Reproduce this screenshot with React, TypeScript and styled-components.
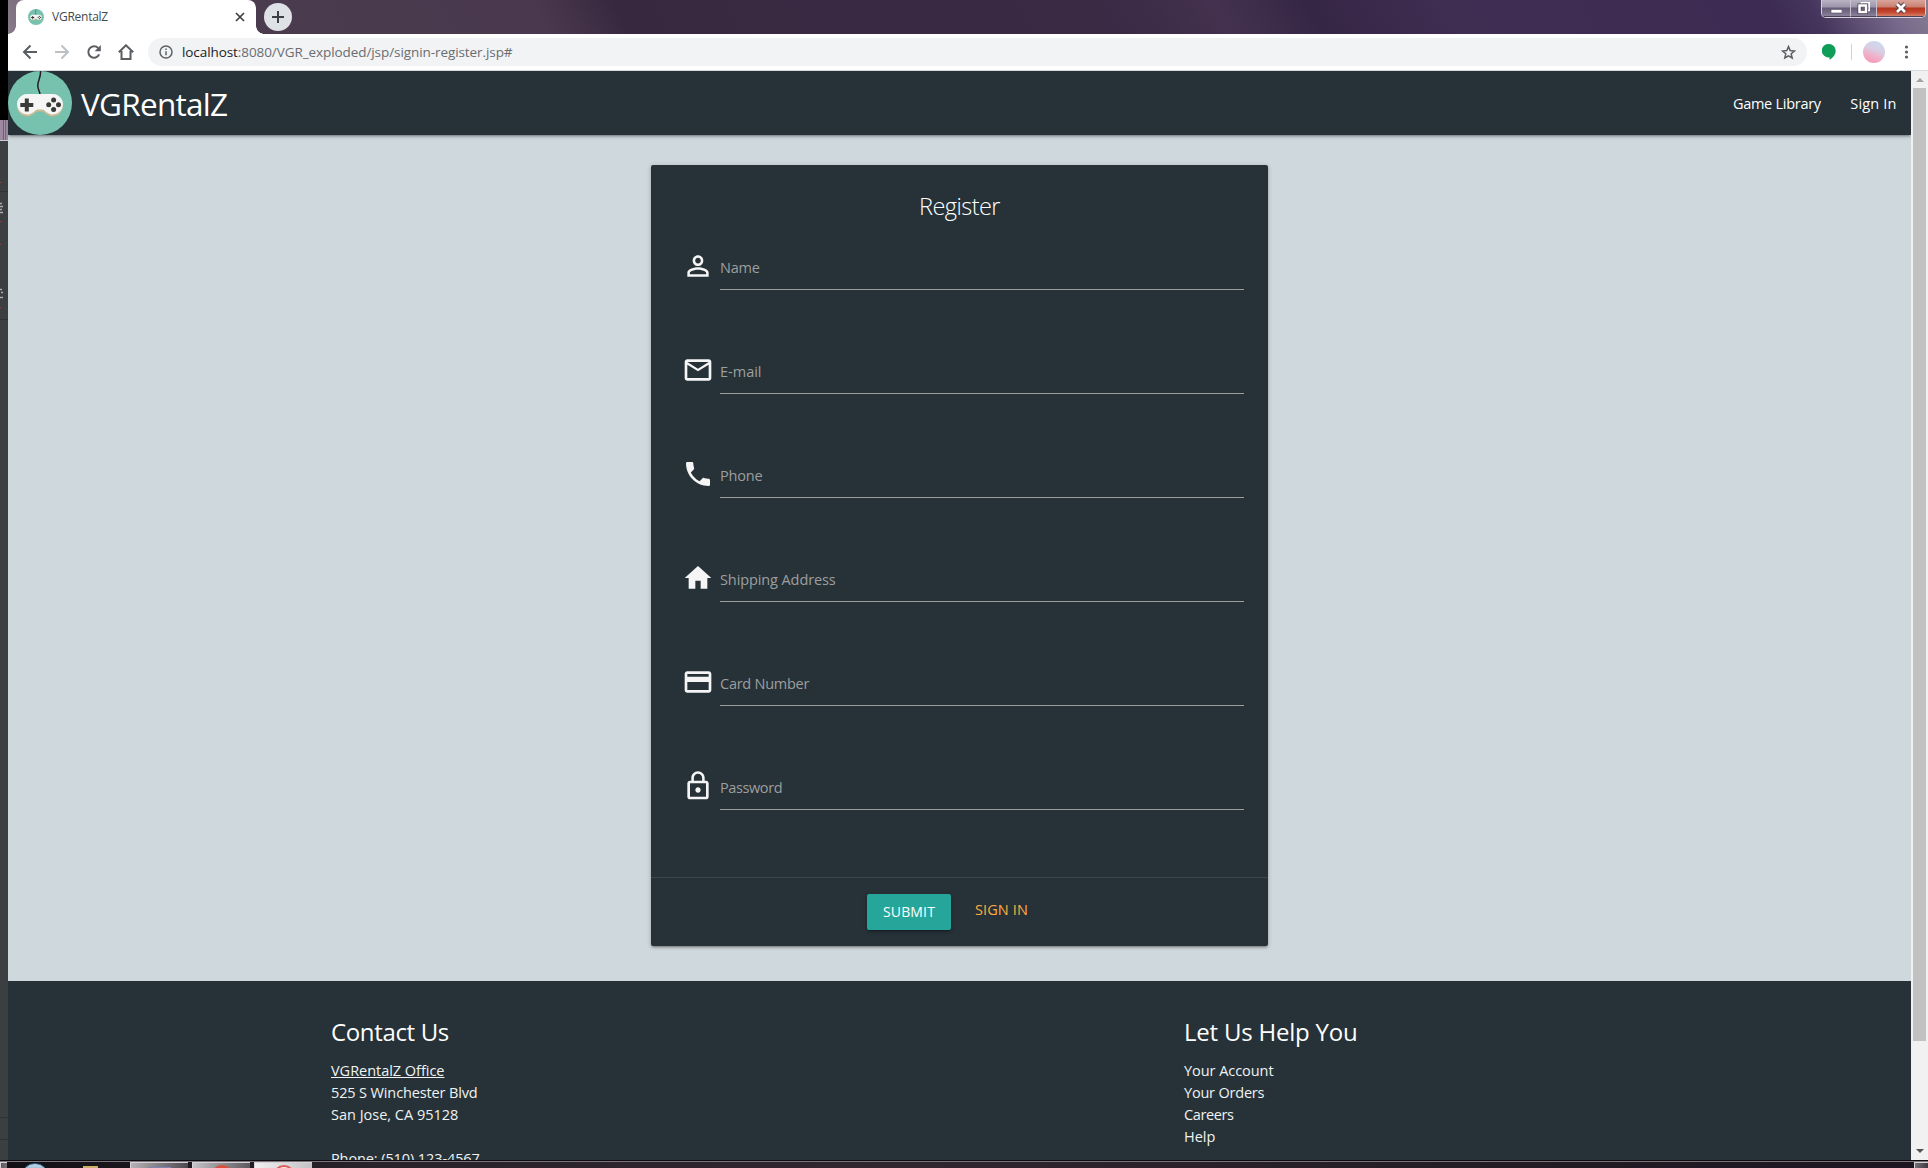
import React from "react";
import styled, { createGlobalStyle } from "styled-components";

const GlobalStyle = createGlobalStyle`
  * { box-sizing: border-box; }
  html, body { margin: 0; padding: 0; overflow: hidden; }
  body { font-family: "Open Sans", "Noto Sans", sans-serif; font-size: 14.5px; }
  svg { display: block; flex: none; }
`;

/* ---------- desktop ---------- */

const Desktop = styled.div`
  display: flex;
  flex-direction: column;
  width: 1928px;
  height: 1168px;
  overflow: hidden;
  background: #000;
`;

const Workspace = styled.div`
  display: flex;
  height: 1160px;
`;

const BackgroundWindow = styled.div`
  display: flex;
  flex-direction: column;
  width: 8px;
  padding-top: 120px;
  background: #000;
`;

const BackgroundFrame = styled.div`
  height: 21px;
  background: linear-gradient(90deg, #9c88a0 0 3px, #6d5c72 3px 4px, #a592a9 4px 5px, #75647a 5px 6px, #9a879e 6px);
  border-bottom: 1px solid #d3c8d6;
`;

const BackgroundBody = styled.div`
  flex: 1;
  background: #3c3f41;
`;

const Window = styled.div`
  display: flex;
  flex-direction: column;
  width: 1920px;
`;

/* ---------- browser chrome ---------- */

const TitleBar = styled.div`
  display: flex;
  align-items: flex-start;
  height: 34px;
  padding-left: 8px;
  background: linear-gradient(
    60deg,
    #887a8a 0,
    #6c5d70 60px,
    #4a3b4e 220px,
    #4a394e 470px,
    #38283f 540px,
    #3a2a44 960px,
    #43314f 1060px,
    #362645 1140px,
    #402d52 1260px,
    #3d2b53 1540px,
    #45345b 1575px,
    #75688a 1640px,
    #877e94 1680px
  );
`;

const Tab = styled.div`
  position: relative;
  display: flex;
  align-items: center;
  width: 240px;
  height: 34px;
  padding: 0 9px 0 12px;
  background: #fff;
  border-radius: 8px 8px 0 0;

  &::before,
  &::after {
    content: "";
    position: absolute;
    bottom: 0;
    width: 8px;
    height: 8px;
  }
  &::before {
    left: -8px;
    background: radial-gradient(circle at 0 0, transparent 7.5px, #fff 8px);
  }
  &::after {
    right: -8px;
    background: radial-gradient(circle at 100% 0, transparent 7.5px, #fff 8px);
  }
`;

const TabTitle = styled.span`
  flex: 1;
  margin: 0 0 1px 8px;
  font-size: 12px;
  letter-spacing: -0.25px;
  color: #45494d;
`;

const NewTab = styled.div`
  display: flex;
  align-items: center;
  justify-content: center;
  width: 28px;
  height: 28px;
  margin: 3px 0 0 8px;
  border-radius: 50%;
  background: #dee1e6;
`;

const WindowControls = styled.div`
  display: flex;
  width: 105px;
  height: 18px;
  margin-left: auto;
  margin-right: 2px;
  border: 1px solid #d8d2de;
  border-top: 0;
  border-radius: 0 0 5px 5px;
  box-shadow: inset 0 0 0 1px #3d3448;
  overflow: hidden;
`;

const ControlButton = styled.div<{ $width: number; $danger?: boolean }>`
  display: flex;
  align-items: center;
  justify-content: center;
  width: ${(p) => p.$width}px;
  height: 17px;
  border-right: ${(p) => (p.$danger ? 0 : 1)}px solid #c9c2d0;
  border-bottom: 1px solid #4a4058;
  background: ${(p) =>
    p.$danger
      ? "linear-gradient(#d9a49c 0, #c98070 7px, #b53420 8px, #c4472e 12px, #d98a72 17px)"
      : "linear-gradient(#b9b3c4 0, #9d95aa 7px, #675d78 8px, #756b85 12px, #9088a0 17px)"};
`;

const Toolbar = styled.div`
  display: flex;
  align-items: center;
  height: 37px;
  padding-left: 14px;
  background: #fff;
  border-bottom: 1px solid #d7d9dc;
`;

const NavIcons = styled.div`
  display: flex;
  gap: 16px;
  width: 126px;
`;

const AddressBar = styled.div`
  display: flex;
  align-items: center;
  width: 1659px;
  height: 28px;
  padding: 0 11px;
  border-radius: 14px;
  background: #f1f3f4;
`;

const Url = styled.span`
  flex: 1;
  margin-left: 9px;
  font-size: 13.5px;
  letter-spacing: -0.08px;
  line-height: 28px;
  color: #696d72;

  b {
    font-weight: 400;
    color: #202124;
  }
`;

const ToolbarDivider = styled.div`
  width: 1px;
  height: 16px;
  margin: 0 11px 0 15px;
  background: #cfd1d4;
`;

const Avatar = styled.div`
  width: 22px;
  height: 22px;
  margin-right: 15px;
  border-radius: 50%;
  background: linear-gradient(20deg, #f78fb0 0, #f0b0c8 35%, #d8cfe4 60%, #cbdcf0 100%);
`;

/* ---------- page ---------- */

const Viewport = styled.div`
  display: flex;
  height: 1089px;
`;

const Page = styled.div`
  display: flex;
  flex-direction: column;
  width: 1903px;
  overflow: hidden;
  background: #cfd8dc;
  color: #fff;
`;

const Header = styled.header`
  position: relative;
  display: flex;
  align-items: center;
  height: 64px;
  flex: none;
  padding-right: 14.5px;
  background: #263238;
  box-shadow: 0 2px 2px 0 rgba(0, 0, 0, 0.14), 0 3px 1px -2px rgba(0, 0, 0, 0.12),
    0 1px 5px 0 rgba(0, 0, 0, 0.2);
`;

const Brand = styled.span`
  margin-left: 9px;
  padding-top: 1px;
  font-size: 31.5px;
  line-height: 65px;
  letter-spacing: -0.72px;
  color: #fff;
`;

const Menu = styled.nav`
  display: flex;
  gap: 29.5px;
  margin-left: auto;
  padding-top: 2px;
  line-height: 64px;
`;

const Label = styled.span<{ $track?: number }>`
  letter-spacing: ${(p) => p.$track ?? 0}px;
  white-space: nowrap;
`;

const Main = styled.main`
  display: flex;
  justify-content: center;
  height: 846px;
  flex: none;
  padding-top: 30px;
`;

const Card = styled.section`
  width: 617px;
  height: 781px;
  border-radius: 2px;
  background: #263238;
  box-shadow: 0 2px 2px 0 rgba(0, 0, 0, 0.14), 0 3px 1px -2px rgba(0, 0, 0, 0.12),
    0 1px 5px 0 rgba(0, 0, 0, 0.2);
`;

const CardContent = styled.div`
  height: 712px;
  padding: 24px 23px 24px 31px;
`;

const CardTitle = styled.h1`
  margin: 0 0 8px -8px;
  height: 32px;
  font-size: 23.5px;
  font-weight: 300;
  line-height: 35px;
  letter-spacing: -0.55px;
  text-align: center;
`;

const Field = styled.label`
  display: flex;
  height: 104px;
  color: #9e9e9e;

  svg {
    margin-top: 21px;
  }
`;

const FieldInput = styled.div`
  width: 524px;
  height: 61px;
  margin-left: 6px;
  padding-top: 28px;
  border-bottom: 1px solid #9e9e9e;
  line-height: 22px;
`;

const CardAction = styled.div`
  display: flex;
  height: 69px;
  padding: 16px 24px 16px 216px;
  border-top: 1px solid #3c474c;
`;

const SubmitButton = styled.button`
  width: 84px;
  height: 36px;
  padding: 0;
  border: 0;
  border-radius: 2px;
  background: #26a69a;
  color: #fff;
  font: 14px/36px "Open Sans", sans-serif;
  letter-spacing: 0.15px;
  box-shadow: 0 2px 2px 0 rgba(0, 0, 0, 0.14), 0 3px 1px -2px rgba(0, 0, 0, 0.12),
    0 1px 5px 0 rgba(0, 0, 0, 0.2);
`;

const SignInLink = styled.a`
  margin-left: 24px;
  line-height: 31px;
  letter-spacing: 0.1px;
  color: #ffab40;
`;

const Footer = styled.footer`
  display: flex;
  height: 179px;
  flex: none;
  padding: 35px 0 0 323px;
  overflow: hidden;
  background: #263238;
`;

const FooterColumn = styled.div<{ $width: number }>`
  width: ${(p) => p.$width}px;
`;

const FooterHeading = styled.h2<{ $track: number }>`
  margin: 0 0 12px;
  font-size: 24px;
  font-weight: 400;
  line-height: 32px;
  letter-spacing: ${(p) => p.$track}px;
`;

const FooterLine = styled.div<{ $underline?: boolean }>`
  height: 22px;
  line-height: 22px;
  color: #f0f2f3;
  text-decoration: ${(p) => (p.$underline ? "underline" : "none")};
  text-underline-offset: 1px;
  text-decoration-thickness: 1px;
`;

const Scrollbar = styled.div`
  display: flex;
  flex-direction: column;
  align-items: center;
  justify-content: space-between;
  width: 17px;
  padding: 7px 0;
  background: #f1f1f1;
`;

const ScrollArrow = styled.div<{ $down?: boolean }>`
  width: 0;
  height: 0;
  border-left: 4px solid transparent;
  border-right: 4px solid transparent;
  ${(p) =>
    p.$down ? "border-top: 4px solid #505050;" : "border-bottom: 4px solid #a3a3a3;"}
`;

const ScrollThumb = styled.div`
  width: 13px;
  height: 953px;
  margin: 6px 0 auto;
  background: #c1c1c1;
`;

/* ---------- taskbar ---------- */

const Taskbar = styled.div`
  display: flex;
  height: 8px;
  padding-top: 1px;
  border-top: 1px solid #0d0b0e;
  background: linear-gradient(#7d757e 0 1px, transparent 1px),
    linear-gradient(90deg, #120f14 0, #2a222b 380px, #2f262f 900px, #241c25 1500px, #1d151f);
`;

const TaskGlass = styled.div<{ $width: number; $gap: number; $from: string; $to: string }>`
  display: flex;
  justify-content: center;
  width: ${(p) => p.$width}px;
  height: 7px;
  margin-left: ${(p) => p.$gap}px;
  overflow: hidden;
  border-left: 1px solid #d5d2d6;
  border-top: 1px solid #d5d2d6;
  background: linear-gradient(100deg, ${(p) => p.$from}, ${(p) => p.$to});
`;

const StartOrb = styled.div`
  width: 28px;
  height: 28px;
  margin: 1px 0 -22px 14px;
  border-radius: 50%;
  border: 1px solid #2d6692;
  background: linear-gradient(#c4dae8, #8fb4cc 7px);
`;

const FolderTip = styled.div`
  width: 15px;
  height: 2px;
  margin: 4px 0 0 34px;
  background: #cfb06a;
`;

const GlassIcon = styled.div<{ $color: string; $ring?: boolean }>`
  width: 22px;
  height: 22px;
  margin-top: 2px;
  border-radius: 50%;
  background: ${(p) => (p.$ring ? "#f7e9e9" : p.$color)};
  border: 2px solid ${(p) => p.$color};
`;

const BlueTip = styled.div`
  width: 22px;
  height: 2px;
  margin-top: 4px;
  background: #7d84b4;
`;

/* ---------- drawings ---------- */

const PAD_BODY =
  "M19 23h26a10.200 10.200 0 1 1-6.800 18c-1.500-1.500-2.200-2.500-4-2.500h-4.400c-1.800 0-2.500 1-4 2.500A10.200 10.200 0 1 1 19 23z";

const PadLogo = ({ size }: { size: number }) => (
  <svg width={size} height={size} viewBox="0 0 64 64">
    <circle cx="32" cy="32" r="32" fill="#76c2af" />
    <path d="M32.500 0C33 7 29.800 9 29.800 14.500C29.800 19 32 20 32 24" fill="none" stroke="#231f20" strokeWidth="1.500" />
    <path d={PAD_BODY} fill="#c9bb94" transform="translate(0 2)" />
    <path d={PAD_BODY} fill="#f5f5f5" />
    <path d="M16.800 27.500h4v4.500h4.500v4h-4.500v4.500h-4V36h-4.500v-4h4.500z" fill="#3a3a38" />
    <g fill="#3a3a38">
      <circle cx="45.600" cy="29" r="2.500" />
      <circle cx="45.600" cy="38.500" r="2.500" />
      <circle cx="40.700" cy="33.700" r="2.500" />
      <circle cx="50.500" cy="33.700" r="2.500" />
    </g>
  </svg>
);

const MaterialIcon = ({ d, size = 32, color = "#f5f5f5" }: { d: string; size?: number; color?: string }) => (
  <svg width={size} height={size} viewBox="0 0 24 24" fill={color}>
    <path d={d} />
  </svg>
);

const LineIcon = ({ d, color = "#5a5e63" }: { d: string; color?: string }) => (
  <svg width="16" height="16" viewBox="0 0 16 16" fill="none" stroke={color} strokeWidth="2">
    <path d={d} />
  </svg>
);

const ExtensionIcon = styled.svg`
  margin-left: 15px;
`;

const MenuDots = styled.svg`
  margin-left: -2px;
`;

const fields = [
  {
    label: "Name",
    track: -0.2,
    d: "M12 5.9c1.160 0 2.100.94 2.100 2.100s-.94 2.100-2.100 2.100S9.900 9.160 9.900 8s.94-2.100 2.100-2.100m0 9c2.970 0 6.100 1.460 6.100 2.100v1.100H5.900V17c0-.64 3.130-2.100 6.100-2.100M12 4C9.790 4 8 5.790 8 8s1.790 4 4 4 4-1.790 4-4-1.790-4-4-4zm0 9c-2.670 0-8 1.340-8 4v3h16v-3c0-2.660-5.330-4-8-4z",
  },
  {
    label: "E-mail",
    track: 0,
    d: "M20 4H4c-1.100 0-1.990.9-1.990 2L2 18c0 1.100.9 2 2 2h16c1.100 0 2-.9 2-2V6c0-1.100-.9-2-2-2zm0 14H4V8l8 5 8-5v10zm-8-7L4 6h16l-8 5z",
  },
  {
    label: "Phone",
    track: -0.2,
    d: "M6.620 10.790c1.440 2.830 3.760 5.140 6.590 6.590l2.200-2.200c.27-.27.67-.36 1.020-.24 1.120.37 2.330.57 3.570.57.55 0 1 .45 1 1V20c0 .55-.45 1-1 1-9.390 0-17-7.610-17-17 0-.55.45-1 1-1h3.500c.55 0 1 .45 1 1 0 1.250.2 2.450.57 3.570.11.35.03.74-.25 1.020l-2.200 2.200z",
  },
  { label: "Shipping Address", track: -0.1, d: "M10 20v-6h4v6h5v-8h3L12 3 2 12h3v8z" },
  {
    label: "Card Number",
    track: -0.25,
    d: "M20 4H4c-1.110 0-1.990.89-1.990 2L2 18c0 1.110.89 2 2 2h16c1.110 0 2-.89 2-2V6c0-1.110-.89-2-2-2zm0 14H4v-6h16v6zm0-10H4V6h16v2z",
  },
  {
    label: "Password",
    track: -0.4,
    d: "M12 17c1.100 0 2-.9 2-2s-.9-2-2-2-2 .9-2 2 .9 2 2 2zm6-9h-1V6c0-2.760-2.240-5-5-5S7 3.240 7 6v2H6c-1.100 0-2 .9-2 2v10c0 1.100.9 2 2 2h12c1.100 0 2-.9 2-2V10c0-1.100-.9-2-2-2zM8.900 6c0-1.710 1.390-3.100 3.100-3.100s3.100 1.390 3.100 3.100v2H8.900V6zM18 20H6V10h12v10z",
  },
];

const contactLines = [
  { text: "VGRentalZ Office", track: -0.03, underline: true },
  { text: "525 S Winchester Blvd", track: -0.13 },
  { text: "San Jose, CA 95128", track: 0 },
  { text: "", track: 0 },
  { text: "Phone: (510) 123-4567", track: -0.1 },
];

const helpLines = [
  { text: "Your Account", track: -0.05 },
  { text: "Your Orders", track: -0.2 },
  { text: "Careers", track: -0.4 },
  { text: "Help", track: 0 },
];

const BrowserChrome = () => (
  <>
    <TitleBar>
      <Tab>
        <PadLogo size={16} />
        <TabTitle>VGRentalZ</TabTitle>
        <svg width="14" height="14" viewBox="0 0 14 14" stroke="#3c4043" strokeWidth="1.700">
          <path d="M3 3l8 8M11 3l-8 8" />
        </svg>
      </Tab>
      <NewTab>
        <svg width="12" height="12" viewBox="0 0 12 12" stroke="#3c4043" strokeWidth="2">
          <path d="M6 0v12M0 6h12" />
        </svg>
      </NewTab>
      <WindowControls>
        <ControlButton $width={29}>
          <svg width="12" height="14" viewBox="0 0 12 14">
            <rect x="1" y="8.500" width="11" height="3.500" fill="#fff" stroke="#575064" strokeWidth=".6" />
          </svg>
        </ControlButton>
        <ControlButton $width={27}>
          <svg width="14" height="14" viewBox="0 0 14 14" fill="none">
            <path d="M4.500 4V1.800h7.700v7.700H10" stroke="#fff" strokeWidth="1.500" />
            <rect x="2.500" y="4.500" width="6.500" height="6.500" stroke="#454052" strokeWidth="4" />
            <rect x="2.500" y="4.500" width="6.500" height="6.500" stroke="#fff" strokeWidth="2.500" />
          </svg>
        </ControlButton>
        <ControlButton $width={48} $danger>
          <svg width="14" height="14" viewBox="0 0 14 14">
            <path d="M3 3l8 8M11 3l-8 8" stroke="#4d3b45" strokeWidth="4.600" />
            <path d="M3 3l8 8M11 3l-8 8" stroke="#fff" strokeWidth="2.800" />
          </svg>
        </ControlButton>
      </WindowControls>
    </TitleBar>
    <Toolbar>
      <NavIcons>
        <LineIcon d="M15 8H2.500M8.500 1.500L2 8l6.500 6.500" />
        <LineIcon d="M1 8h12.500M7.500 1.500L14 8l-6.500 6.500" color="#bdc0c3" />
        <svg width="16" height="16" viewBox="0 0 16 16">
          <path d="M13.200 10.400A5.700 5.700 0 1 1 12.200 4.100" fill="none" stroke="#5a5e63" strokeWidth="2" />
          <path d="M14.800 1v6.200H8.600z" fill="#5a5e63" />
        </svg>
        <LineIcon d="M0.800 8.300L8 1.300l7.200 7M3.500 7v8h9V7" />
      </NavIcons>
      <AddressBar>
        <svg width="14" height="14" viewBox="0 0 14 14" fill="none" stroke="#5f6368" strokeWidth="1.500">
          <circle cx="7" cy="7" r="6" />
          <path d="M7 6.200v4M7 3.500v1.500" />
        </svg>
        <Url>
          <b>localhost</b>:8080/VGR_exploded/jsp/signin-register.jsp#
        </Url>
        <svg width="15" height="15" viewBox="0 0 15 15" fill="none" stroke="#5a5e63" strokeWidth="1.500">
          <path d="M7.500 1.600l1.700 4 4.300.4-3.300 2.800 1 4.200-3.700-2.200L3.800 13l1-4.200L1.500 6l4.300-.4z" />
        </svg>
      </AddressBar>
      <ExtensionIcon width="14" height="16" viewBox="0 0 14 16">
        <path d="M7 0a6.700 6.700 0 0 1 6.700 6.700c0 4-3 7.300-6.200 9v-2.400A6.700 6.700 0 1 1 7 0z" fill="#0f9d58" />
      </ExtensionIcon>
      <ToolbarDivider />
      <Avatar />
      <MenuDots width="16" height="16" viewBox="0 0 16 16" fill="#5a5e63">
        <circle cx="8.500" cy="3" r="1.600" />
        <circle cx="8.500" cy="8" r="1.600" />
        <circle cx="8.500" cy="13" r="1.600" />
      </MenuDots>
    </Toolbar>
  </>
);

const RegisterCard = () => (
  <Card>
    <CardContent>
      <CardTitle>Register</CardTitle>
      {fields.map((f) => (
        <Field key={f.label}>
          <MaterialIcon d={f.d} />
          <FieldInput>
            <Label $track={f.track}>{f.label}</Label>
          </FieldInput>
        </Field>
      ))}
    </CardContent>
    <CardAction>
      <SubmitButton>SUBMIT</SubmitButton>
      <SignInLink>SIGN IN</SignInLink>
    </CardAction>
  </Card>
);

export default function App() {
  return (
    <Desktop>
      <GlobalStyle />
      <Workspace>
        <BackgroundWindow>
          <BackgroundFrame />
          <BackgroundBody>
            <svg width="8" height="1019" viewBox="0 141 8 1019">
              <path d="M0 191.500h8M0 1117.500h8M0 1139.500h8M0 319.500h8" stroke="#303335" />
              <path d="M0 203.500h2M0 206.500h3M0 209.500h2M0 212.500h3M0 289.500h2M1 292.500h2M0 297.500h3" stroke="#a9adb0" strokeWidth="1.500" />
              <path d="M0 221.500h1M0 244.500h1M0 307.500h1M0 182.500h1" stroke="#a83a3a" />
            </svg>
          </BackgroundBody>
        </BackgroundWindow>
        <Window>
          <BrowserChrome />
          <Viewport>
            <Page>
              <Header>
                <PadLogo size={64} />
                <Brand>VGRentalZ</Brand>
                <Menu>
                  <Label $track={-0.27}>Game Library</Label>
                  <Label $track={0.15}>Sign In</Label>
                </Menu>
              </Header>
              <Main>
                <RegisterCard />
              </Main>
              <Footer>
                <FooterColumn $width={853}>
                  <FooterHeading $track={-0.35}>Contact Us</FooterHeading>
                  {contactLines.map((l, i) => (
                    <FooterLine key={i} $underline={l.underline}>
                      <Label $track={l.track}>{l.text}</Label>
                    </FooterLine>
                  ))}
                </FooterColumn>
                <FooterColumn $width={400}>
                  <FooterHeading $track={-0.22}>Let Us Help You</FooterHeading>
                  {helpLines.map((l) => (
                    <FooterLine key={l.text}>
                      <Label $track={l.track}>{l.text}</Label>
                    </FooterLine>
                  ))}
                </FooterColumn>
              </Footer>
            </Page>
            <Scrollbar>
              <ScrollArrow />
              <ScrollThumb />
              <ScrollArrow $down />
            </Scrollbar>
          </Viewport>
        </Window>
      </Workspace>
      <Taskbar>
        <TaskGlass $width={7} $gap={0} $from="#5c575d" $to="#77727a" />
        <StartOrb />
        <FolderTip />
        <TaskGlass $width={58} $gap={32} $from="#b5b3b6" $to="#4c474e">
          <BlueTip />
        </TaskGlass>
        <TaskGlass $width={58} $gap={4} $from="#c4c2c5" $to="#5c585e">
          <GlassIcon $color="#d9503f" />
        </TaskGlass>
        <TaskGlass $width={58} $gap={4} $from="#f2f1f2" $to="#c2c0c3">
          <GlassIcon $color="#de5a5a" $ring />
        </TaskGlass>
        <TaskGlass $width={14} $gap={1602} $from="#777278" $to="#3c373e" />
      </Taskbar>
    </Desktop>
  );
}
